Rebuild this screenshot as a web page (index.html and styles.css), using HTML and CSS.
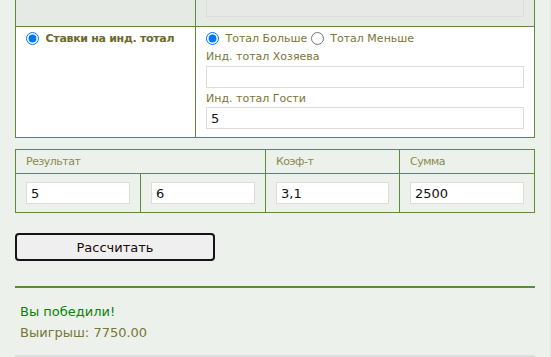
FILE: index.html
```html
<!DOCTYPE html>
<html lang="ru">
<head>
<meta charset="utf-8">
<link rel="stylesheet" href="styles.css">
</head>
<body>
<div class="page">
  <div class="bet">
    <div class="cell c-left top"></div>
    <div class="cell c-right top"><div class="stub"></div></div>
    <div class="cell c-left main">
      <label class="mode"><input type="radio" name="mode" checked> Ставки на инд. тотал</label>
    </div>
    <div class="cell c-right main">
      <div class="radios">
        <label class="opt"><input type="radio" name="tot" checked> Тотал Больше</label>
        <label class="opt"><input type="radio" name="tot"> Тотал Меньше</label>
      </div>
      <div class="lbl lbl-first">Инд. тотал Хозяева</div>
      <input class="fld" type="text">
      <div class="lbl lbl-second">Инд. тотал Гости</div>
      <input class="fld" type="text" value="5">
    </div>
  </div>

  <div class="res">
    <div class="hcell span2">Результат</div>
    <div class="hcell">Коэф-т</div>
    <div class="hcell">Сумма</div>
    <div class="bcell"><input class="fld" type="text" value="5"></div>
    <div class="bcell"><input class="fld" type="text" value="6"></div>
    <div class="bcell"><input class="fld" type="text" value="3,1"></div>
    <div class="bcell"><input class="fld" type="text" value="2500"></div>
  </div>

  <button class="calc" type="button">Рассчитать</button>

  <div class="result">
    <div class="win">Вы победили!</div>
    <div class="prize">Выигрыш: 7750.00</div>
  </div>
</div>
</body>
</html>
```

FILE: styles.css
```css
html, body {
  margin: 0;
  padding: 0;
  background: #ecf1eb;
}
body {
  font-family: "DejaVu Sans", Verdana, sans-serif;
  font-size: 11px;
  color: #7d7a3c;
}
.page {
  width: 520px;
  padding: 0 15px;
  height: 357px;
  border-right: 1px solid #e0e6df;
  overflow: hidden;
}
.bet {
  display: grid;
  grid-template-columns: 180px 338px;
  border-left: 1px solid #5f8b3d;
  border-right: 1px solid #5f8b3d;
}
.cell {
  border-bottom: 1px solid #5f8b3d;
  padding: 0 10px;
}
.c-left {
  border-right: 1px solid #5f8b3d;
}
.top {
  height: 26px;
  background: #e5eae4;
}
.stub {
  height: 16px;
  background: #e6e9e5;
  border: 1px solid #dadfd9;
  border-top: none;
}
.main {
  background: #ffffff;
  padding-top: 5px;
  padding-bottom: 8px;
  height: 97px;
}
.mode {
  font-weight: bold;
  color: #6b6a2c;
  display: block;
  line-height: 13px;
  white-space: nowrap;
  letter-spacing: -0.3px;
}
input[type="radio"] {
  margin: 0 3px 0 0;
  width: 13px;
  height: 13px;
  vertical-align: bottom;
}
.radios {
  height: 13px;
  line-height: 13px;
  white-space: nowrap;
}
.opt {
  color: #7a7636;
}
.lbl {
  line-height: 15px;
  color: #7a7636;
}
.lbl-first {
  margin-top: 4px;
  margin-bottom: 2px;
}
.lbl-second {
  margin-top: 3px;
  margin-bottom: 1px;
}
.fld {
  display: block;
  box-sizing: border-box;
  width: 100%;
  height: 22px;
  margin: 0;
  padding: 0 4px;
  border: 1px solid #dcdcdc;
  background: #ffffff;
  font-family: "DejaVu Sans", Verdana, sans-serif;
  font-size: 13px;
  color: #111111;
  outline: none;
}
.res {
  margin-top: 11px;
  display: grid;
  grid-template-columns: 125px 125px 134px 135px;
  border-left: 1px solid #5f8b3d;
  border-top: 1px solid #5f8b3d;
}
.hcell, .bcell {
  border-right: 1px solid #5f8b3d;
  border-bottom: 1px solid #5f8b3d;
  padding: 0 10px;
}
.hcell {
  height: 23px;
  line-height: 23px;
  color: #8a8a4e;
  letter-spacing: -0.5px;
}
.span2 {
  grid-column: span 2;
}
.bcell {
  padding-top: 8px;
  padding-bottom: 8px;
}
.calc {
  display: block;
  margin-top: 20px;
  width: 200px;
  height: 28px;
  box-sizing: border-box;
  border: 2px solid #141414;
  border-radius: 4px;
  background: #efefef;
  font-family: "DejaVu Sans", Verdana, sans-serif;
  font-size: 13px;
  color: #1a0a0a;
  padding: 0;
}
.result {
  margin-top: 25px;
  border-top: 2px solid #5c8b3c;
  padding: 13px 5px 12px;
  border-bottom: 2px solid #dcdfdb;
  font-size: 13px;
  line-height: 21px;
}
.win {
  color: #0a820a;
}
.prize {
  color: #7a7636;
}
```
